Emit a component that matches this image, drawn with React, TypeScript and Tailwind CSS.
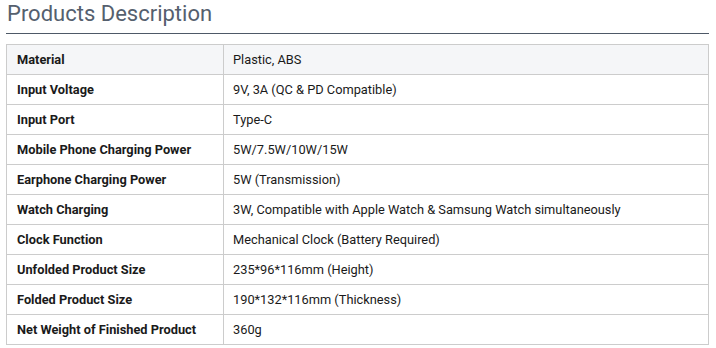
const rows: [string, string][] = [
  ["Material", "Plastic, ABS"],
  ["Input Voltage", "9V, 3A (QC & PD Compatible)"],
  ["Input Port", "Type-C"],
  ["Mobile Phone Charging Power", "5W/7.5W/10W/15W"],
  ["Earphone Charging Power", "5W (Transmission)"],
  ["Watch Charging", "3W, Compatible with Apple Watch & Samsung Watch simultaneously"],
  ["Clock Function", "Mechanical Clock (Battery Required)"],
  ["Unfolded Product Size", "235*96*116mm (Height)"],
  ["Folded Product Size", "190*132*116mm (Thickness)"],
  ["Net Weight of Finished Product", "360g"],
];

export default function App() {
  return (
    <div className="h-[348px] w-[716px] bg-white font-['Roboto',sans-serif]">
      <div className="w-[709px] pl-[6px]">
        <h2 className="border-b border-[#4e5967] pb-[6px] pl-px text-[22px] leading-[27px] text-[#55606e]">
          Products Description
        </h2>
        <table className="mt-[10px] w-full border-collapse text-[12.8px] text-[#1a1a1a]">
          <tbody>
            {rows.map(([label, value], i) => (
              <tr key={label} className={i === 0 ? "bg-[#f5f6f8]" : "bg-white"}>
                <td className="h-[30px] w-[217px] border border-[#cccccc] px-[10px] font-bold">
                  {label}
                </td>
                <td className="h-[30px] border border-[#cccccc] px-[9px]">{value}</td>
              </tr>
            ))}
          </tbody>
        </table>
      </div>
    </div>
  );
}
